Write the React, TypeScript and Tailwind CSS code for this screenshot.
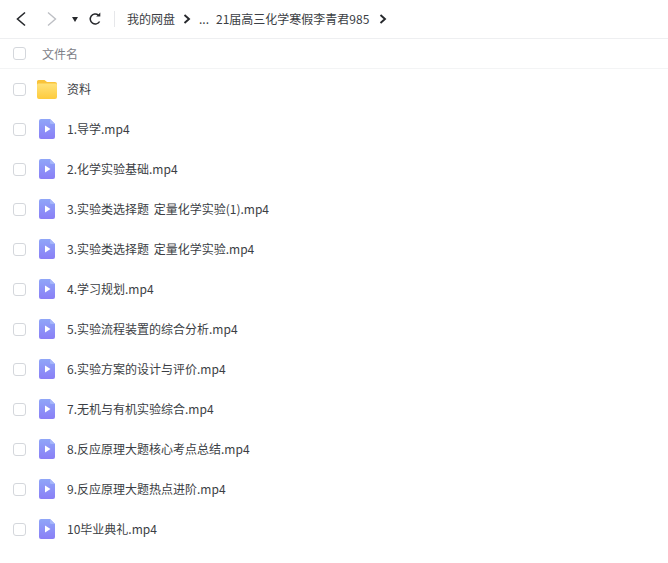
const files = [
  "1.导学.mp4",
  "2.化学实验基础.mp4",
  "3.实验类选择题 定量化学实验(1).mp4",
  "3.实验类选择题 定量化学实验.mp4",
  "4.学习规划.mp4",
  "5.实验流程装置的综合分析.mp4",
  "6.实验方案的设计与评价.mp4",
  "7.无机与有机实验综合.mp4",
  "8.反应原理大题核心考点总结.mp4",
  "9.反应原理大题热点进阶.mp4",
  "10毕业典礼.mp4",
];

const font = { fontFamily: '"Noto Sans CJK SC", "Liberation Sans", sans-serif' };

function Check() {
  return <span className="w-[13px] h-[13px] rounded-[3px] border border-[#d4d7dc] bg-white shrink-0" />;
}

function Chevron({ className = "" }: { className?: string }) {
  return (
    <svg width="8" height="10" viewBox="0 0 8 10" className={className} fill="none">
      <path d="M1.5 1 L6 5 L1.5 9" stroke="#26282c" strokeWidth="1.9" />
    </svg>
  );
}

function VideoIcon() {
  return (
    <svg width="16" height="20" viewBox="0 0 16 20" className="shrink-0">
      <defs>
        <linearGradient id="v" x1="0" y1="0" x2="0" y2="1">
          <stop offset="0" stopColor="#8fa6f8" />
          <stop offset="1" stopColor="#8a7ef6" />
        </linearGradient>
      </defs>
      <path d="M2 0 H11 L16 5 V18 a2 2 0 0 1-2 2 H2 a2 2 0 0 1-2-2 V2 a2 2 0 0 1 2-2z" fill="url(#v)" />
      <path d="M11 0 L16 5 H12.5 a1.5 1.5 0 0 1-1.5-1.5z" fill="#a6b6fa" />
      <path d="M6 6.5 L11.5 10 L6 13.5z" fill="#fff" />
    </svg>
  );
}

function FolderIcon() {
  return (
    <svg width="20" height="19" viewBox="0 0 20 19" className="shrink-0">
      <defs>
        <linearGradient id="f" x1="0" y1="0" x2="0" y2="1">
          <stop offset="0" stopColor="#ffe27a" />
          <stop offset="1" stopColor="#fdcb3c" />
        </linearGradient>
      </defs>
      <path d="M1.5 0 H7.5 L10 2 H18 a2 2 0 0 1 2 2 V5 H0 V1.5 A1.5 1.5 0 0 1 1.5 0z" fill="#f9c33a" />
      <path d="M1.5 3.5 H18.5 A1.5 1.5 0 0 1 20 5 V17 a2 2 0 0 1-2 2 H2 a2 2 0 0 1-2-2 V5 A1.5 1.5 0 0 1 1.5 3.5z" fill="url(#f)" />
    </svg>
  );
}

function Row({ icon, name }: { icon: React.ReactNode; name: string }) {
  return (
    <div className="h-10 flex items-center pl-[13px]">
      <Check />
      <div className="w-[20px] ml-[11px] flex justify-center">{icon}</div>
      <span className="ml-[10px] text-[12px] text-[#3b3e44] whitespace-pre [word-spacing:2px]">{name}</span>
    </div>
  );
}

export default function App() {
  return (
    <div className="w-[668px] h-[563px] bg-white overflow-hidden" style={font}>
      <div className="h-[39px] flex items-center border-b border-[#eeeff1]">
        <svg width="12" height="16" viewBox="0 0 12 16" className="ml-[15px]" fill="none">
          <path d="M10 1.5 L2.5 8 L10 14.5" stroke="#26282c" strokeWidth="1.6" />
        </svg>
        <svg width="12" height="16" viewBox="0 0 12 16" className="ml-[19px]" fill="none">
          <path d="M2 1.5 L9.5 8 L2 14.5" stroke="#bdbfc4" strokeWidth="1.4" />
        </svg>
        <span className="ml-[14px] w-0 h-0 border-x-[3.5px] border-x-transparent border-t-[5px] border-t-[#26282c]" />
        <svg width="14" height="14" viewBox="0 0 14 14" className="ml-[10px]" fill="none">
          <path d="M11.6 9.5 A5 5 0 1 1 10.5 3.2" stroke="#26282c" strokeWidth="1.5" />
          <path d="M8.2 4.4 L12.3 4.4 L12.3 0.6z" fill="#26282c" />
        </svg>
        <span className="ml-[12px] w-px h-[16px] bg-[#e6e7ea]" />
        <span className="ml-[12px] text-[12px] text-[#3b3e44]">我的网盘</span>
        <Chevron className="ml-[8px]" />
        <span className="ml-[8px] text-[12px] text-[#3b3e44]">...</span>
        <span className="ml-[7px] text-[12px] text-[#3b3e44]">21届高三化学寒假李青君985</span>
        <Chevron className="ml-[10px]" />
      </div>
      <div className="h-[30px] flex items-center pl-[13px] border-b border-[#f3f4f5]">
        <Check />
        <span className="ml-[16px] text-[12px] text-[#7d8087]">文件名</span>
      </div>
      <Row icon={<FolderIcon />} name="资料" />
      {files.map((f) => (
        <Row key={f} icon={<VideoIcon />} name={f} />
      ))}
    </div>
  );
}
